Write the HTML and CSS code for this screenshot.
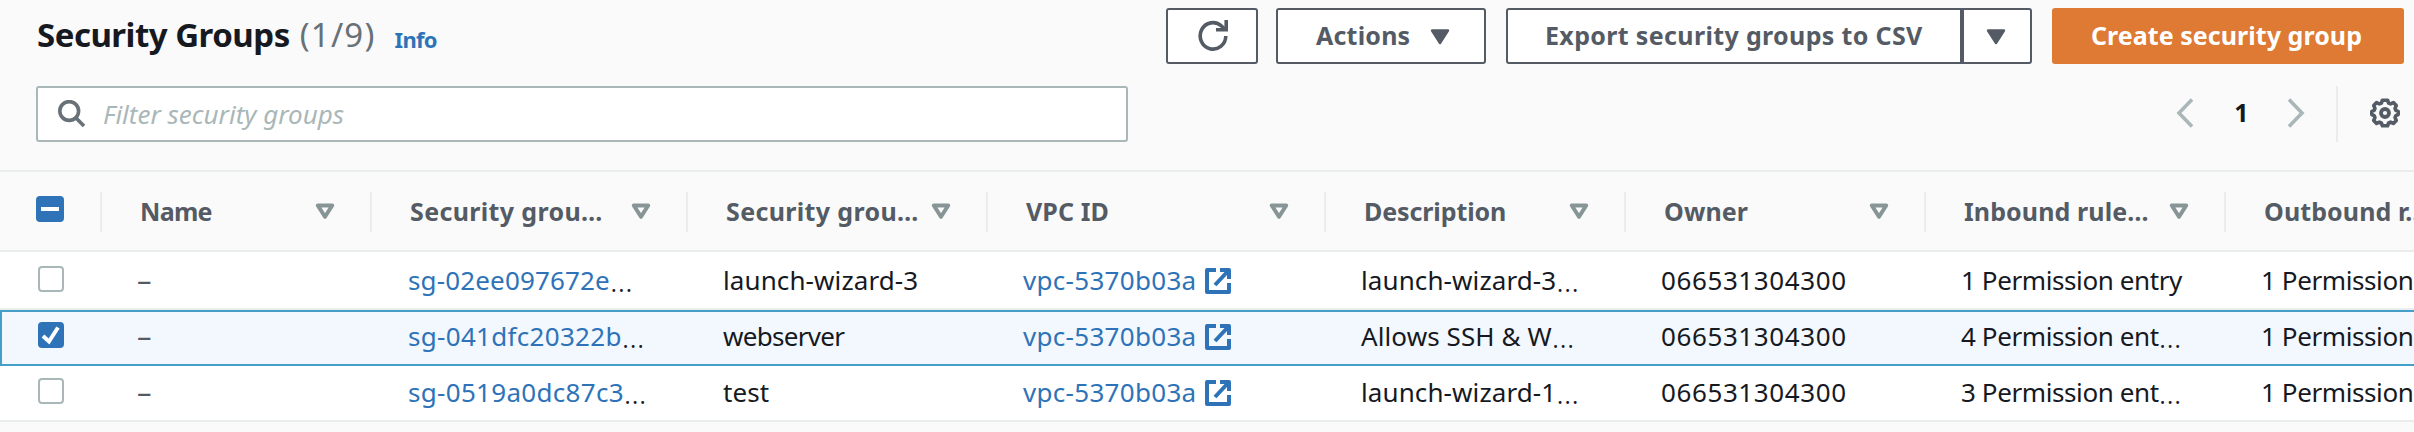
FILE: index.html
```
<!DOCTYPE html>
<html lang="en">
<head>
<meta charset="utf-8">
<title>Security Groups</title>
<link rel="stylesheet" href="styles.css">
</head>
<body>
<svg class="defs" aria-hidden="true">
  <symbol id="caret" viewBox="0 0 20 16"><path d="M2 1.5h16L10 14z" fill="currentColor" stroke="currentColor" stroke-width="2.4" stroke-linejoin="round"/></symbol>
  <symbol id="sort" viewBox="0 0 20 17"><path d="M2.8 2.5h14.4L10 13.8z" fill="none" stroke="currentColor" stroke-width="4" stroke-linejoin="round"/></symbol>
  <symbol id="external" viewBox="0 0 26 26"><path d="M11 2H2v22h22v-9M15 2h9v9M24 2L10 17" fill="none" stroke="currentColor" stroke-width="4" stroke-linejoin="round"/></symbol>
</svg>

<header class="toolbar">
  <h1 class="title">Security Groups</h1>
  <span class="count">(1/9)</span>
  <a class="info">Info</a>
  <div class="actions">
    <button class="btn btn-refresh" aria-label="Refresh">
      <svg width="30" height="32" viewBox="0 0 30 32" fill="none" stroke="currentColor" stroke-width="3.6"><path d="M27.8 16A12.8 13.2 0 1 1 23.5 6L26.5 9"/><path d="M28.2 0v9.8H18"/></svg>
    </button>
    <button class="btn btn-actions"><span>Actions</span><svg class="caret"><use href="#caret"/></svg></button>
    <div class="split">
      <button class="btn btn-export">Export security groups to CSV</button>
      <button class="btn btn-more" aria-label="More export options"><svg class="caret"><use href="#caret"/></svg></button>
    </div>
    <button class="btn btn-create">Create security group</button>
  </div>
</header>

<div class="filterbar">
  <div class="search">
    <svg width="28" height="28" viewBox="0 0 28 28" fill="none" stroke="currentColor" stroke-width="3.6"><circle cx="11.2" cy="11" r="9.4"/><path d="M17.8 17.8L26 26"/></svg>
    <span class="placeholder">Filter security groups</span>
  </div>
  <nav class="pager">
    <svg width="18" height="30" viewBox="0 0 18 30" fill="none" stroke="currentColor" stroke-width="3.6"><path d="M16 1.5L3 15l13 13.5"/></svg>
    <span class="page">1</span>
    <svg width="18" height="30" viewBox="0 0 18 30" fill="none" stroke="currentColor" stroke-width="3.6"><path d="M2 1.5L15 15 2 28.5"/></svg>
  </nav>
  <div class="settings">
    <svg width="30" height="30" viewBox="0 0 30 30" fill="none" stroke="currentColor"><path stroke-width="3.6" stroke-linejoin="round" d="M12.4 2.2h5.2l1 2.9 2 .8 2.8-1.3 2.9 3-1.3 2.8.8 2 2.4 1v3.2l-2.4 1-.8 2 1.3 2.8-2.9 3-2.8-1.3-2 .8-1 2.9h-5.2l-1-2.9-2-.8-2.8 1.3-2.9-3L5 19.6l-.8-2-2.4-1v-3.2l2.4-1 .8-2-1.3-2.8 2.9-3 2.8 1.3 2-.8z"/><circle cx="15" cy="15" r="4" stroke-width="3.8"/></svg>
  </div>
</div>

<section class="table">
  <div class="row head">
    <div class="cell check"><span class="box mixed"><svg width="28" height="26" viewBox="0 0 28 26"><path d="M5 13h18" stroke="#fff" stroke-width="4"/></svg></span></div>
    <div class="cell"><span class="t-name">Name</span><svg class="sort"><use href="#sort"/></svg></div>
    <div class="cell"><span class="t-group">Security grou…</span><svg class="sort"><use href="#sort"/></svg></div>
    <div class="cell"><span class="t-group">Security grou…</span><svg class="sort"><use href="#sort"/></svg></div>
    <div class="cell"><span>VPC ID</span><svg class="sort"><use href="#sort"/></svg></div>
    <div class="cell"><span class="t-desc">Description</span><svg class="sort"><use href="#sort"/></svg></div>
    <div class="cell"><span>Owner</span><svg class="sort"><use href="#sort"/></svg></div>
    <div class="cell"><span class="t-rules">Inbound rule…</span><svg class="sort"><use href="#sort"/></svg></div>
    <div class="cell"><span class="t-rules">Outbound r…</span></div>
  </div>

  <div class="row first">
    <div class="cell check"><span class="box"></span></div>
    <div class="cell dash">–</div>
    <div class="cell"><a class="id-a">sg-02ee097672e</a><i class="more">…</i></div>
    <div class="cell">launch-wizard-3</div>
    <div class="cell"><a class="vpc">vpc-5370b03a</a><svg class="external"><use href="#external"/></svg></div>
    <div class="cell">launch-wizard-3<i class="more">…</i></div>
    <div class="cell num">066531304300</div>
    <div class="cell perm">1 Permission entry</div>
    <div class="cell perm">1 Permission entry</div>
  </div>

  <div class="row selected">
    <div class="cell check"><span class="box on"><svg width="26" height="26" viewBox="0 0 26 26"><path d="M5 14l6 5.5L20 5.5" fill="none" stroke="#fff" stroke-width="4"/></svg></span></div>
    <div class="cell dash">–</div>
    <div class="cell"><a class="id-b">sg-041dfc20322b</a><i class="more">…</i></div>
    <div class="cell word">webserver</div>
    <div class="cell"><a class="vpc">vpc-5370b03a</a><svg class="external"><use href="#external"/></svg></div>
    <div class="cell">Allows SSH &amp; W<i class="more">…</i></div>
    <div class="cell num">066531304300</div>
    <div class="cell perm">4 Permission ent<i class="more">…</i></div>
    <div class="cell perm">1 Permission entry</div>
  </div>

  <div class="row last">
    <div class="cell check"><span class="box"></span></div>
    <div class="cell dash">–</div>
    <div class="cell"><a class="id-b">sg-0519a0dc87c3</a><i class="more">…</i></div>
    <div class="cell">test</div>
    <div class="cell"><a class="vpc">vpc-5370b03a</a><svg class="external"><use href="#external"/></svg></div>
    <div class="cell">launch-wizard-1<i class="more">…</i></div>
    <div class="cell num">066531304300</div>
    <div class="cell perm">3 Permission ent<i class="more">…</i></div>
    <div class="cell perm">1 Permission entry</div>
  </div>
</section>
</body>
</html>
```
FILE: styles.css
```
* { box-sizing: border-box; }
body {
  margin: 0;
  height: 432px;
  overflow: hidden;
  background: #fafafa;
  color: #16191f;
  font: 26px/36px "Noto Sans", "Open Sans", sans-serif;
  white-space: nowrap;
}
svg { display: block; flex: none; }
.defs { display: none; }

/* Title and buttons */
.toolbar { display: flex; height: 72px; padding: 8px 10px 0 37px; }
.title { margin: 0; font-size: 33px; line-height: 54px; font-weight: 700; letter-spacing: -.5px; }
.count { margin-left: 10px; font-size: 33px; line-height: 54px; color: #687078; letter-spacing: 1.2px; }
.info { margin-left: 19px; font-size: 22px; line-height: 63px; font-weight: 700; color: #2e73b8; letter-spacing: -.7px; }
.actions { display: flex; margin-left: auto; }
.btn {
  display: flex;
  align-items: center;
  height: 56px;
  margin: 0;
  padding: 0 0 2px;
  border: 2px solid #545b64;
  border-radius: 3px;
  background: #fff;
  color: #545b64;
  font: 700 25px/36px "Noto Sans", "Open Sans", sans-serif;
}
.caret { width: 20px; height: 16px; }
.btn-refresh { width: 92px; padding: 0 0 0 30px; }
.btn-actions { width: 210px; margin-left: 18px; padding-left: 38px; letter-spacing: .2px; }
.btn-actions .caret { margin-left: 20px; margin-top: 4px; }
.split { display: flex; margin: 0 20px; }
.btn-export { width: 456px; padding-left: 37px; border-radius: 3px 0 0 3px; letter-spacing: .35px; }
.btn-more { width: 70px; padding-left: 22px; border-radius: 0 3px 3px 0; }
.btn-more .caret { margin-top: 4px; }
.btn-create { width: 352px; padding-left: 37px; border-color: #de7a33; background: #de7a33; color: #fff; letter-spacing: .05px; }

/* Filter and paging */
.filterbar { display: flex; height: 98px; padding: 14px 14px 0 36px; }
.search {
  display: flex;
  align-items: center;
  width: 1092px;
  height: 56px;
  padding-left: 20px;
  border: 2px solid #aab7b8;
  border-radius: 3px;
  background: #fff;
  color: #687078;
}
.placeholder { margin-left: 17px; font-style: italic; color: #aab7b8; }
.pager { display: flex; align-items: center; height: 56px; margin-left: auto; padding-right: 31px; color: #aab7b8; }
.pager svg { margin-top: -2px; }
.page { width: 93px; padding: 0 0 4px 2px; text-align: center; font-weight: 700; font-size: 25px; color: #16191f; }
.settings { display: flex; align-items: center; width: 64px; height: 56px; padding-left: 32px; padding-bottom: 2px; border-left: 2px solid #eaeded; color: #545b64; }

/* Table */
.table { width: 2524px; border-top: 2px solid #eaeded; }
.row {
  display: grid;
  grid-template-columns: 102px 270px 316px 300px 338px 300px 300px 300px 298px;
  background: #fff;
}
.cell { display: flex; align-items: center; padding-left: 35px; letter-spacing: .1px; }
.head { height: 80px; padding: 20px 0; border-bottom: 2px solid #eaeded; background: #fafafa; }
.head .cell { height: 40px; padding: 0 35px 2px 38px; border-right: 2px solid #eaeded; color: #545b64; font-size: 25px; font-weight: 700; }
.sort { width: 20px; height: 17px; margin-left: auto; color: #879596; }
.head .t-name { letter-spacing: -.7px; }
.head .t-group { letter-spacing: .35px; }
.head .t-rules { letter-spacing: .1px; }
.head .t-desc { letter-spacing: -.1px; }

.first { height: 58px; border-bottom: 2px solid #eaeded; }
.selected { height: 56px; padding-bottom: 4px; border: 2px solid #469fc8; background: #f2f8fd; }
.selected .cell { position: relative; left: -2px; }
.last { height: 56px; padding-bottom: 2px; border-bottom: 2px solid #eaeded; }

.row .check { padding-left: 38px; }
.head .check { padding: 0 0 6px 36px; }
.box { width: 26px; height: 26px; border: 2px solid #aab7b8; border-radius: 4px; background: #fff; }
.row:not(.head) .box { margin-bottom: 2px; }
.mixed, .on { border: 0; background: #2e73b8; }
.mixed { width: 28px; }

.dash { color: #545b64; font-size: 29px; }
.more { font-size: 31px; font-style: normal; font-weight: 300; color: #16191f; line-height: 36px; }
a { color: #2e73b8; }
.id-a { margin-left: 1px; letter-spacing: .15px; }
.id-b { margin-left: 1px; letter-spacing: .3px; }
.vpc { letter-spacing: .3px; }
.external { width: 26px; height: 26px; margin-left: 9px; margin-top: 1px; color: #2e73b8; }
.num { letter-spacing: .6px; }
.word { letter-spacing: -.7px; }
.perm { letter-spacing: -.4px; }
```
